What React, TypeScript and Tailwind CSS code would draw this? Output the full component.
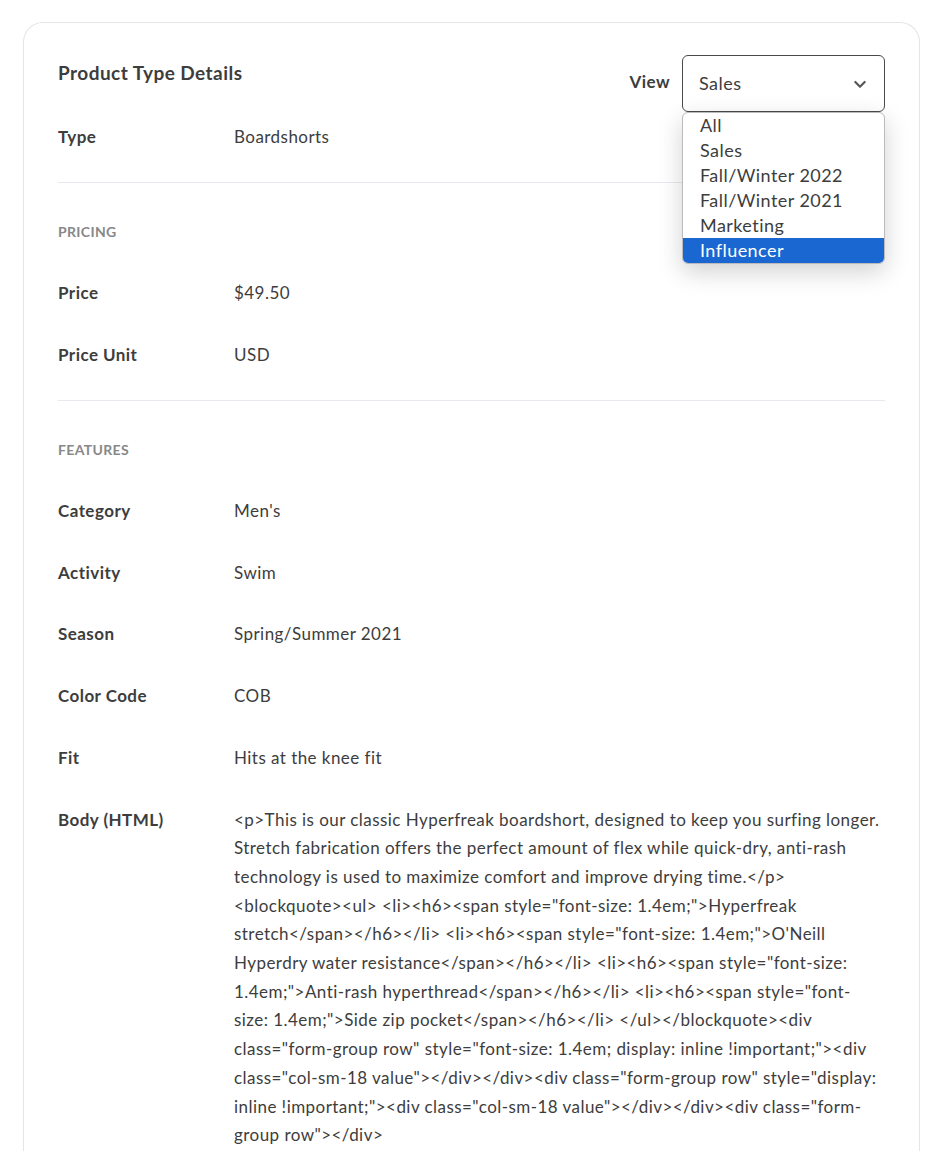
import React from "react";

const Row = ({ label, children }: { label: string; children: React.ReactNode }) => (
  <div className="flex items-start py-[16.5px]">
    <div className="w-[176px] shrink-0 font-bold text-[#3d3d3d]">{label}</div>
    <div className="flex-1 text-[#3d3d3d]">{children}</div>
  </div>
);

const body = `<p>This is our classic Hyperfreak boardshort, designed to keep you surfing longer. Stretch fabrication offers the perfect amount of flex while quick-dry, anti-rash technology is used to maximize comfort and improve drying time.</p> <blockquote><ul> <li><h6><span style="font-size: 1.4em;">Hyperfreak stretch</span></h6></li> <li><h6><span style="font-size: 1.4em;">O'Neill Hyperdry water resistance</span></h6></li> <li><h6><span style="font-size: 1.4em;">Anti-rash hyperthread</span></h6></li> <li><h6><span style="font-size: 1.4em;">Side zip pocket</span></h6></li> </ul></blockquote><div class="form-group row" style="font-size: 1.4em; display: inline !important;"><div class="col-sm-18 value"></div></div><div class="form-group row" style="display: inline !important;"><div class="col-sm-18 value"></div></div><div class="form-group row"></div>`;

export default function App() {
  const options = ["All", "Sales", "Fall/Winter 2022", "Fall/Winter 2021", "Marketing", "Influencer"];
  return (
    <div className="min-h-screen bg-white pt-[22px] pl-[23px] pr-[31px] text-[17px] leading-[28.7px] tracking-[0.45px]" style={{ fontFamily: "Lato, 'Noto Sans', sans-serif" }}>
      <div className="relative rounded-t-[20px] border border-b-0 border-[#e5e5ea] px-[34px] pt-[37px] pb-4">
        <div className="flex items-start justify-between">
          <h2 className="text-[19px] font-bold text-[#3d3d3d] mt-[-1px]">Product Type Details</h2>
          <div className="flex items-start gap-3">
            <span className="font-bold text-[#3d3d3d] mt-[8px]">View</span>
            <div className="relative">
              <div className="w-[203px] h-[57px] mt-[-5px] rounded-md border border-[#4a4a4a] flex items-center justify-between px-4 text-[18px] text-[#3d3d3d]">
                Sales
                <svg width="16" height="16" viewBox="0 0 24 24" fill="none" stroke="#555" strokeWidth="3.2" strokeLinecap="round" strokeLinejoin="round"><path d="M5 9l7 7 7-7" /></svg>
              </div>
              <div className="absolute left-0 top-[52px] w-[203px] z-10 rounded-md border border-[#bbb] bg-white shadow-[0_8px_24px_rgba(0,0,0,0.18)] overflow-hidden">
                {options.map((o) => (
                  <div key={o} className={`px-[17px] h-[25px] leading-[25px] text-[18px] ${o === "Influencer" ? "bg-[#1a67d2] text-white" : "text-[#3d3d3d]"}`}>{o}</div>
                ))}
              </div>
            </div>
          </div>
        </div>
        <div className="mt-[-6px] pb-[14px] border-b border-[#e8e8ee]">
          <Row label="Type">Boardshorts</Row>
        </div>
        <div className="pt-[35px] text-[14px] font-bold uppercase tracking-wide text-[#888]">Pricing</div>
        <div className="pt-[16px] pb-[14px] border-b border-[#e8e8ee]">
          <Row label="Price">$49.50</Row>
          <Row label="Price Unit">USD</Row>
        </div>
        <div className="pt-[35px] text-[14px] font-bold uppercase tracking-wide text-[#888]">Features</div>
        <div className="pt-[16px]">
          <Row label="Category">Men's</Row>
          <Row label="Activity">Swim</Row>
          <Row label="Season">Spring/Summer 2021</Row>
          <Row label="Color Code">COB</Row>
          <Row label="Fit">Hits at the knee fit</Row>
          <Row label="Body (HTML)"><span className="break-words">{body}</span></Row>
        </div>
      </div>
    </div>
  );
}
